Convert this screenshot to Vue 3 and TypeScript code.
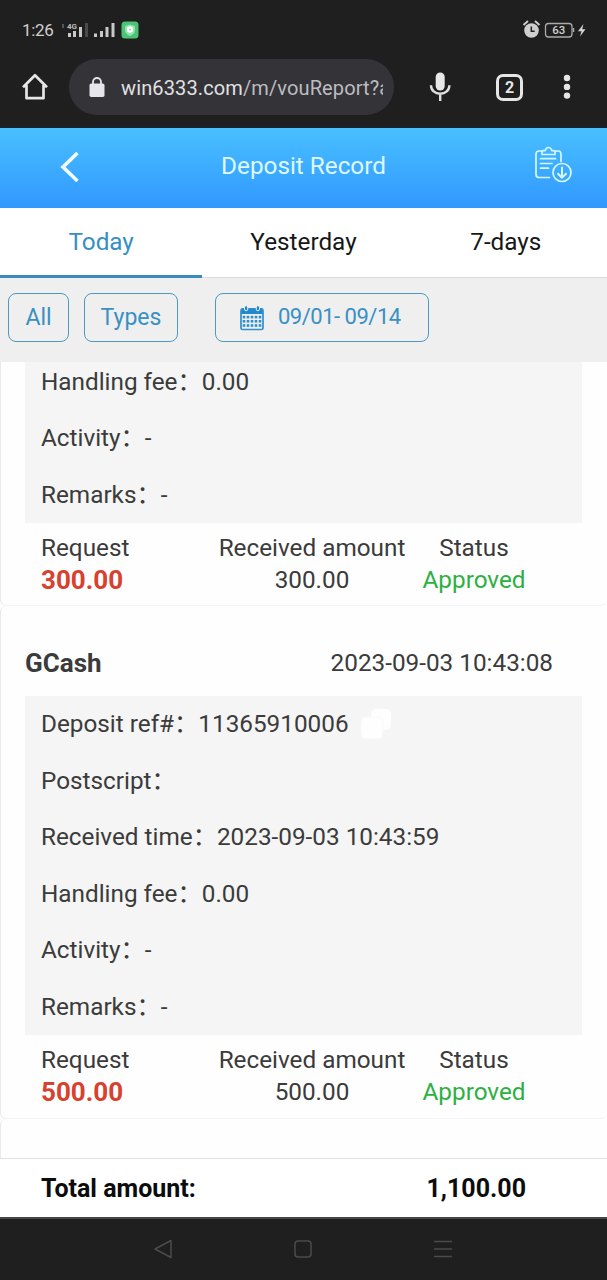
<script setup lang="ts">
interface Row {
  label: string
  value: string
  copy?: boolean
}

interface Deposit {
  method: string
  time: string
  rows: Row[]
  amount: string
}

const tabs: string[] = ['Today', 'Yesterday', '7-days']

const deposits: Deposit[] = [
  {
    method: '',
    time: '',
    rows: [
      { label: 'Handling fee', value: '0.00' },
      { label: 'Activity', value: '-' },
      { label: 'Remarks', value: '-' },
    ],
    amount: '300.00',
  },
  {
    method: 'GCash',
    time: '2023-09-03 10:43:08',
    rows: [
      { label: 'Deposit ref#', value: '11365910006', copy: true },
      { label: 'Postscript', value: '' },
      { label: 'Received time', value: '2023-09-03 10:43:59' },
      { label: 'Handling fee', value: '0.00' },
      { label: 'Activity', value: '-' },
      { label: 'Remarks', value: '-' },
    ],
    amount: '500.00',
  },
]

const calendarRows: number[] = [12, 16.2, 20.4]
const calendarCols: number[] = [4, 8, 12, 16, 20]
</script>

<template>
  <div class="screen">
    <header class="chrome">
      <div class="status">
        <span class="clock">1:26</span>
        <svg class="signals" width="84" height="24" viewBox="0 0 84 24">
          <rect x="2" y="5" width="2" height="4" fill="#555" />
          <text x="7" y="10" class="net">4G</text>
          <g fill="#c9c9c9">
            <rect x="8" y="14" width="3" height="4" />
            <rect x="13" y="12" width="3" height="6" />
            <rect x="19" y="8" width="3" height="10" />
            <rect x="34" y="14.500" width="3" height="3.500" />
            <rect x="40" y="12" width="3" height="6" />
            <rect x="45.500" y="8" width="3" height="10" />
            <rect x="51.500" y="4" width="3" height="14" />
          </g>
          <rect x="25" y="4" width="3" height="14" fill="#4a4a4a" />
          <rect x="61.500" y="2.500" width="17" height="17" rx="3.500" fill="#4cc475" />
          <path d="M70 5.500l5 1.600v4.200c0 2.800-2.300 4.700-5 5.700-2.700-1-5-2.900-5-5.700V7.100z" fill="#8fe3ab" />
          <circle cx="70" cy="10.500" r="3.200" fill="#fff" />
          <circle cx="70" cy="10.500" r="1" fill="#8ed6a6" />
        </svg>
        <svg class="power" width="68" height="22" viewBox="0 0 68 22">
          <circle cx="9.500" cy="11.500" r="7.300" fill="#cfcfcf" />
          <path d="M1.500 6l4.500-4M13 2l4.500 4" stroke="#cfcfcf" stroke-width="1.900" fill="none" />
          <path d="M9.300 7.500v4.700h3.400" stroke="#222" stroke-width="1.500" fill="none" />
          <rect x="23.500" y="4.500" width="26.500" height="13.500" rx="3" fill="none" stroke="#aaa" stroke-width="1.300" />
          <path d="M51.500 9v4" stroke="#aaa" stroke-width="1.500" />
          <text x="36.800" y="15.200" text-anchor="middle" class="charge">63</text>
          <path d="M61.500 5l-5.500 7.200h3.500l-1.500 5.300 5.500-7.300h-3.300z" fill="#d4d4d4" />
        </svg>
      </div>
      <div class="browser">
        <svg class="home" width="28" height="28" viewBox="0 0 28 28">
          <path d="M2 14.300L14 2.300l12 12M5.500 12v13.200h17V12" fill="none" stroke="#e6e6e6" stroke-width="2.700" stroke-linejoin="round" />
        </svg>
        <div class="address">
          <svg width="16" height="21" viewBox="0 0 16 21">
            <rect x="0.500" y="6.500" width="15" height="13.500" rx="1.800" fill="#e6e4ec" />
            <path d="M4 7V5a4 4 0 0 1 8 0v2" fill="none" stroke="#e6e4ec" stroke-width="1.800" />
          </svg>
          <div class="url">win6333.com<span>/m/vouReport?a</span></div>
        </div>
        <svg class="mic" width="24" height="32" viewBox="0 0 24 32">
          <rect x="7.700" y="1.500" width="9" height="18" rx="4.500" fill="#e8e8e8" />
          <path d="M3 14.200c0 5.200 4 8.600 9.200 8.600s9.200-3.400 9.200-8.600M12.200 23v7" fill="none" stroke="#e0e0e0" stroke-width="2.400" />
        </svg>
        <div class="count">2</div>
        <svg class="more" width="8" height="26" viewBox="0 0 8 26">
          <circle cx="4" cy="4" r="3.200" />
          <circle cx="4" cy="12.900" r="3.200" />
          <circle cx="4" cy="21.600" r="3.200" />
        </svg>
      </div>
    </header>

    <div class="titlebar">
      <svg class="back" width="20" height="32" viewBox="0 0 20 32">
        <path d="M17.500 2L3 16l14.500 14" fill="none" stroke="#f2fdff" stroke-width="3.600" />
      </svg>
      <h1>Deposit Record</h1>
      <svg class="export" width="38" height="37" viewBox="0 0 38 37">
        <g fill="none" stroke="#d5f8ff" stroke-width="1.700" stroke-linecap="round" stroke-linejoin="round">
          <path d="M8 5H5Q2 5 2 8v20.500q0 3 3 3h10.500M21 5h3q3 0 3 3v7.500" />
          <path d="M8 8.500V5.800q0-1.200 1.300-1.200h2Q12 1.500 14.500 1.500t3.200 3.100h2Q21 4.600 21 5.800v2.700z" />
          <path d="M6.500 12.700h15M6.500 17.500h11.500M6.500 22.200h8" />
          <circle cx="28" cy="26.500" r="9" />
          <path d="M28 21.500v10M24 27.800l4 4 4-4" stroke-width="2" />
        </g>
      </svg>
    </div>

    <nav class="tabs">
      <div v-for="(tab, i) in tabs" :key="tab" class="tab" :class="{ active: i === 0 }">{{ tab }}</div>
    </nav>

    <div class="filters">
      <div class="chip all">All</div>
      <div class="chip types">Types</div>
      <div class="chip range">
        <svg width="24" height="26" viewBox="0 0 24 26">
          <path d="M1 9V4.500Q1 3 2.500 3h19Q23 3 23 4.500V9z" fill="#2187cf" />
          <rect x="1" y="4" width="22" height="20.500" rx="1.500" fill="none" stroke="#318fca" stroke-width="1.700" />
          <g fill="#2187cf" stroke="#eef3f6" stroke-width="1">
            <rect x="4.500" y="0.700" width="3.200" height="5" rx="1.500" />
            <rect x="16.300" y="0.700" width="3.200" height="5" rx="1.500" />
          </g>
          <template v-for="y in calendarRows" :key="y">
            <rect v-for="x in calendarCols" :key="x" :x="x - 1.300" :y="y - 1.200" width="2.600" height="2.600" fill="#2d90ce" />
          </template>
        </svg>
        <span>09/01- 09/14</span>
      </div>
    </div>

    <main class="records">
      <section v-for="d in deposits" :key="d.amount" class="card">
        <div v-if="d.method" class="cardhead">
          <strong>{{ d.method }}</strong>
          <time>{{ d.time }}</time>
        </div>
        <div class="details">
          <div v-for="r in d.rows" :key="r.label" class="row">
            <span>{{ r.label }}：{{ r.value }}</span>
            <svg v-if="r.copy" class="copy" width="32" height="32" viewBox="0 0 32 32">
              <rect x="11" y="1" width="20" height="21" rx="5" fill="#fefefe" />
              <rect x="1" y="9" width="22" height="22" rx="5" fill="#fefefe" stroke="#f8f8f8" />
            </svg>
          </div>
        </div>
        <div class="summary">
          <div class="request">Request<b>{{ d.amount }}</b></div>
          <div class="received">Received amount<span>{{ d.amount }}</span></div>
          <div class="state">Status<em>Approved</em></div>
        </div>
      </section>
      <section class="card next"></section>
    </main>

    <footer class="total">
      <span>Total amount:</span>
      <span class="sum">1,100.00</span>
    </footer>

    <div class="softkeys">
      <svg width="20" height="20" viewBox="0 0 20 20"><path d="M18 1.500v17L2 10z" /></svg>
      <svg width="20" height="20" viewBox="0 0 20 20"><rect x="2" y="2" width="16" height="16" rx="3" /></svg>
      <svg width="20" height="20" viewBox="0 0 20 20"><path d="M1 2.500h18M1 10h18M1 17.500h18" /></svg>
    </div>
  </div>
</template>

<style>
body {
  margin: 0;
  background: #fff;
}
</style>

<style scoped>
.screen {
  width: 607px;
  height: 1280px;
  overflow: hidden;
  display: flex;
  flex-direction: column;
  background: #fefefe;
  font-family: Roboto, "Noto Sans CJK SC", sans-serif;
  font-size: 24.300px;
  line-height: 32px;
  color: #3b3b3b;
}
.screen > * {
  box-sizing: border-box;
  flex-shrink: 0;
}
.chrome {
  height: 128px;
  background: #1f1f1f;
  border-bottom: 2px solid #17242b;
}
.status {
  display: flex;
  align-items: center;
  height: 59px;
  padding: 0 17px 0 22px;
}
.clock {
  font-size: 17px;
  letter-spacing: -0.3px;
  width: 38px;
  color: #cfcfcf;
}
.signals {
  margin-top: 2px;
}
.net {
  font: bold 8px Roboto, sans-serif;
  fill: #bdbdbd;
}
.power {
  margin-left: auto;
}
.charge {
  font: 500 11.500px Roboto, sans-serif;
  fill: #cfcfcf;
}
.browser {
  display: flex;
  align-items: center;
  height: 56px;
  padding-left: 21px;
}
.address {
  box-sizing: border-box;
  display: flex;
  align-items: center;
  width: 325px;
  height: 56px;
  margin-left: 20px;
  padding-left: 20px;
  border-radius: 28px;
  background: #343338;
}
.url {
  width: 262px;
  margin: 2px 0 0 16px;
  overflow: hidden;
  white-space: nowrap;
  font-size: 20px;
  letter-spacing: 0.120px;
  color: #e1e1e3;
}
.url span {
  color: #bdbdc0;
}
.mic {
  margin-left: 34px;
}
.count {
  box-sizing: border-box;
  width: 27px;
  height: 27px;
  margin-left: 44px;
  border: 3px solid #e6e6e6;
  border-radius: 7px;
  font-size: 16px;
  font-weight: 700;
  line-height: 21px;
  text-align: center;
  color: #e6e6e6;
}
.more {
  margin-left: 40px;
  fill: #e6e6e6;
}
.titlebar {
  display: grid;
  grid-template-columns: 100px 1fr 100px;
  align-items: center;
  height: 80px;
  padding-bottom: 4px;
  background: linear-gradient(#49c0ff, #3198ff);
}
.back {
  margin: 2px 0 0 60px;
}
.titlebar h1 {
  margin: 0;
  font-size: 24.300px;
  font-weight: 400;
  text-align: center;
  color: #def8ff;
}
.export {
  margin: -4px 0 0 26.500px;
}
.tabs {
  display: flex;
  height: 70px;
  border-bottom: 1px solid #dcdcdc;
  background: #fff;
}
.tab {
  box-sizing: border-box;
  flex: 1;
  height: 70px;
  padding-top: 18px;
  text-align: center;
  color: #171717;
}
.tab.active {
  color: #368fc4;
  border-bottom: 3px solid #3a8bbd;
}
.filters {
  display: flex;
  height: 84px;
  padding: 15px 8px;
  background: #efefef;
}
.chip {
  box-sizing: border-box;
  height: 49px;
  border: 1px solid #4b9abf;
  border-radius: 8px;
  font-size: 23px;
  line-height: 47px;
  text-align: center;
  color: #3990c4;
}
.all {
  width: 61px;
}
.types {
  width: 94px;
  margin-left: 15px;
}
.range {
  display: flex;
  align-items: center;
  width: 214px;
  margin-left: 37px;
  padding-left: 24px;
  font-size: 22px;
  letter-spacing: -0.500px;
}
.range span {
  margin: -3px 0 0 14px;
}
.records {
  height: 796px;
  overflow: hidden;
}
.card {
  box-sizing: border-box;
  border-left: 1px solid #e9e9e9;
  border-bottom: 1px solid #f4f4f4;
  border-radius: 6px;
}
.card:first-child {
  height: 252.500px;
  margin-top: -8.500px;
}
.card:nth-child(2) {
  height: 513px;
}
.card.next {
  height: 60px;
}
.cardhead {
  display: flex;
  align-items: center;
  justify-content: space-between;
  height: 90px;
  padding: 24px 54px 0 24px;
  box-sizing: border-box;
}
.cardhead strong {
  font-size: 26px;
}
.details {
  margin: 0 25px 0 24px;
  background: #f5f5f5;
}
.row {
  display: flex;
  align-items: center;
  height: 56.500px;
  padding-left: 16px;
  white-space: nowrap;
}
.row > span {
  margin-top: -0.500px;
}
.copy {
  margin-left: 11px;
}
.summary {
  display: grid;
  grid-template-columns: 177.500px 187px 120px;
  padding: 8.500px 0 0 40px;
}
.summary > div {
  display: flex;
  flex-direction: column;
  align-items: center;
  white-space: nowrap;
}
.summary .request {
  align-items: flex-start;
}
.summary .state {
  margin-left: 17px;
}
b {
  font-size: 26px;
  color: #d8412f;
}
em {
  font-style: normal;
  color: #2bb141;
}
.total {
  display: flex;
  align-items: center;
  justify-content: space-between;
  height: 59px;
  padding: 1px 81px 0 41px;
  border-top: 1px solid #e2e2e2;
  background: #fff;
  font-size: 25px;
  font-weight: 700;
  color: #0c0c0c;
}
.softkeys {
  display: flex;
  align-items: center;
  height: 63px;
  padding: 0 0 2px 153px;
  gap: 120px;
  border-top: 2px solid #484848;
  background: #1f1f1f;
}
.softkeys svg {
  fill: none;
  stroke: #4b4b4b;
  stroke-width: 1.500;
  stroke-linejoin: round;
}
</style>
